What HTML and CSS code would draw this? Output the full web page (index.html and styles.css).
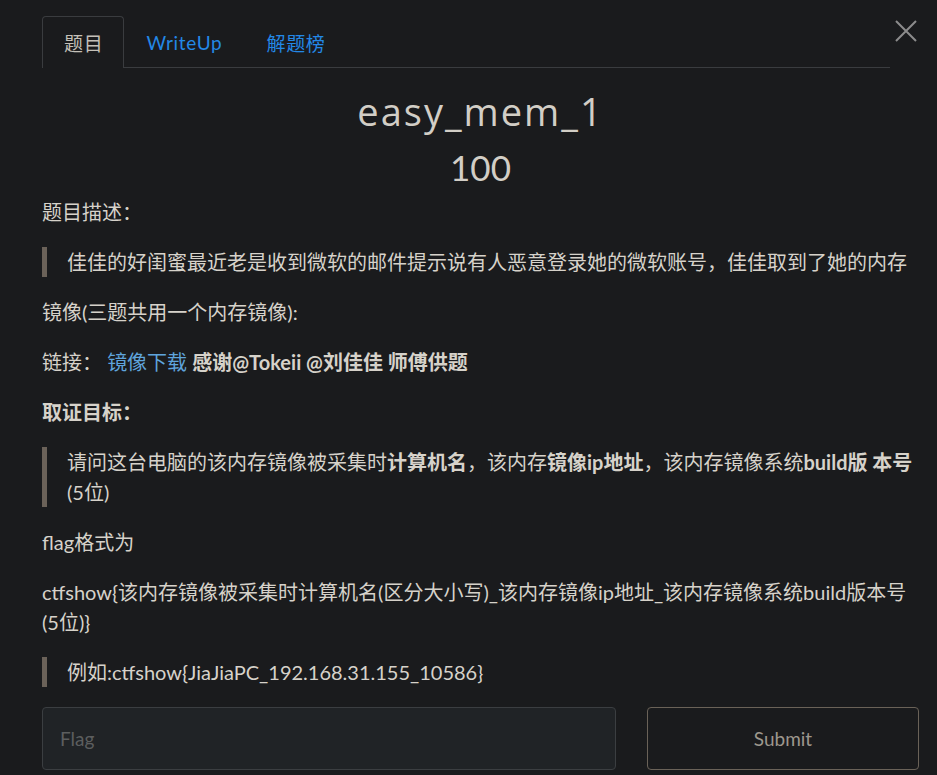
FILE: index.html
```html
<!DOCTYPE html>
<html lang="zh-CN">
<head>
<meta charset="utf-8">
<title>easy_mem_1</title>
<link rel="stylesheet" href="styles.css">
</head>
<body>
<div class="modal">
  <button class="close" aria-label="close">
    <svg width="24" height="24" viewBox="0 0 24 24"><path d="M2 2L22 22M22 2L2 22" stroke="#8c8c8c" stroke-width="2" fill="none"/></svg>
  </button>
  <div class="tabs-wrap">
    <ul class="tabs">
      <li class="tab active">题目</li>
      <li class="tab">WriteUp</li>
      <li class="tab">解题榜</li>
    </ul>
  </div>
  <div class="head">
    <h1 class="title">easy_mem_1</h1>
    <div class="score">100</div>
  </div>
  <div class="desc">
    <p>题目描述：</p>
    <blockquote><p>佳佳的好闺蜜最近老是收到微软的邮件提示说有人恶意登录她的微软账号，佳佳取到了她的内存</p></blockquote>
    <p>镜像(三题共用一个内存镜像):</p>
    <p>链接： <a class="link">镜像下载</a> <b>感谢@Tokeii @刘佳佳 师傅供题</b></p>
    <p><b>取证目标：</b></p>
    <blockquote><p>请问这台电脑的该内存镜像被采集时<b>计算机名</b>，该内存<b>镜像ip地址</b>，该内存镜像系统<b>build版 本号</b>(5位)</p></blockquote>
    <p>flag格式为</p>
    <p>ctfshow{该内存镜像被采集时计算机名(区分大小写)_该内存镜像ip地址_该内存镜像系统build版本号(5位)}</p>
    <blockquote><p>例如:ctfshow{JiaJiaPC_192.168.31.155_10586}</p></blockquote>
  </div>
  <form class="submit-row">
    <input class="flag-input" type="text" placeholder="Flag">
    <button class="submit" type="button">Submit</button>
  </form>
</div>
</body>
</html>
```

FILE: styles.css
```css
html, body {
  margin: 0;
  padding: 0;
  background: #1a1b1d;
}
body {
  font-family: Lato, "Noto Sans CJK SC", sans-serif;
  color: #d6d2ca;
}
.modal {
  position: relative;
  padding: 16px 18px 0 42px;
}
.close {
  position: absolute;
  top: 19px;
  right: 19px;
  width: 24px;
  height: 24px;
  padding: 0;
  border: 0;
  background: none;
  cursor: pointer;
}
.close svg { display: block; }
.tabs-wrap {
  padding-right: 29px;
}
.tabs {
  list-style: none;
  margin: 0;
  padding: 0;
  display: flex;
  border-bottom: 1px solid #3a3c3f;
}
.tab {
  height: 50px;
  padding: 0 21px 0 21px;
  display: flex;
  align-items: center;
  font-size: 19px;
  letter-spacing: 0.7px;
  color: #2388e6;
  border: 1px solid transparent;
  border-bottom: 0;
  border-radius: 4px 4px 0 0;
  margin-bottom: -1px;
}
.tab.active {
  color: #c4c0b8;
  border-color: #3a3c3f;
  background: #1a1b1d;
  height: 51px;
  padding-right: 20px;
}
.head {
  text-align: center;
  padding-top: 15px;
}
.title {
  margin: 0;
  font-family: "Open Sans", sans-serif;
  font-weight: 400;
  font-size: 38px;
  letter-spacing: 2px;
  line-height: 56px;
  color: #d2cec6;
}
.score {
  margin-top: 6px;
  font-size: 35px;
  line-height: 44px;
  color: #d2cec6;
}
.desc {
  padding-top: 8px;
  font-size: 20px;
  line-height: 30px;
}
.desc p {
  margin: 0 0 20px;
}
.desc blockquote {
  margin: 0 0 20px;
  padding: 0 0 0 20px;
  border-left: 5px solid #6b6259;
}
.desc blockquote p {
  margin: 0;
}
.desc b {
  font-weight: 700;
}
.link {
  color: #5fa4dc;
  text-decoration: none;
}
.submit-row {
  display: flex;
  gap: 31px;
  margin: 0;
}
.flag-input {
  flex: 0 0 574px;
  box-sizing: border-box;
  height: 63px;
  padding: 0 17px;
  background: #202326;
  border: 1px solid #3b3e41;
  border-radius: 4px;
  font-family: Lato, "Noto Sans CJK SC", sans-serif;
  font-size: 19px;
  color: #d6d2ca;
  outline: none;
}
.flag-input::placeholder {
  color: #5c5e5f;
}
.submit {
  flex: 1;
  box-sizing: border-box;
  height: 63px;
  background: transparent;
  border: 1px solid #6a6258;
  border-radius: 4px;
  font-family: Lato, "Noto Sans CJK SC", sans-serif;
  font-size: 19px;
  color: #9d978d;
}
```
